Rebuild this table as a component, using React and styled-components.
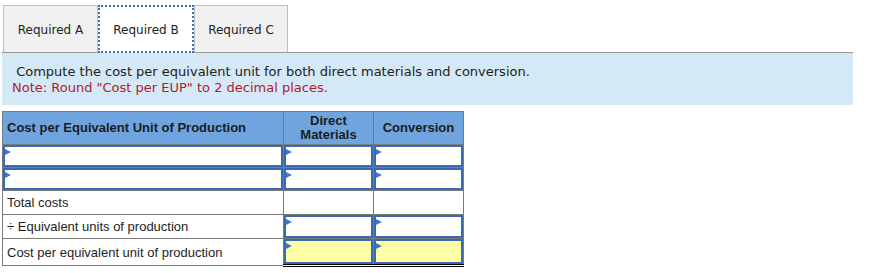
import React from "react";
import styled, { createGlobalStyle } from "styled-components";

const Global = createGlobalStyle`
  html, body { margin: 0; padding: 0; background: #fff; }
  body { font-family: "DejaVu Sans", Verdana, sans-serif; }
`;

const Page = styled.div`
  padding: 5px 0 0 2px;
  width: 851px;
`;

const TabBar = styled.div`
  display: flex;
  padding-left: 1px;
  border-bottom: 1px solid #9a9a9a;
  height: 47px;
`;

const Tab = styled.div`
  display: flex;
  align-items: center;
  justify-content: center;
  box-sizing: border-box;
  padding-top: 2px;
  width: ${(p) => p.$w}px;
  height: ${(p) => (p.$active ? 48 : 47)}px;
  font-size: 12px;
  color: #222;
  background: ${(p) => (p.$active ? "#fff" : "#f0f0f0")};
  border: ${(p) => (p.$active ? "2px dotted #3f6fb6" : "1px solid #bdbdbd")};
  border-bottom: ${(p) => (p.$active ? "2px dotted #3f6fb6" : "none")};
  ${(p) => (p.$active ? "position: relative; z-index: 1;" : "")}
`;

const Note = styled.div`
  background: #d5e8f6;
  height: 52px;
  box-sizing: border-box;
  padding: 11px 0 0 10px;
  font-size: 13px;
  line-height: 16px;
  color: #222;
`;

const Warn = styled.div`
  color: #b0202c;
`;

const Table = styled.table`
  margin-top: 6px;
  border-collapse: collapse;
  table-layout: fixed;
  width: 461px;
  font-family: "Liberation Sans", Arial, sans-serif;
  font-size: 13px;
  color: #1e1e1e;
`;

const Th = styled.th`
  background: #6fa4df;
  border: 1px solid #7a7a7a;
  height: 32px;
  padding: 0 4px;
  font-weight: bold;
  text-align: ${(p) => (p.$left ? "left" : "center")};
  line-height: 14px;
  color: #1c1c1c;
`;

const Td = styled.td`
  border: 1px solid #7a7a7a;
  height: ${(p) => p.$h}px;
  padding: ${(p) => (p.$text ? "0 4px" : "0")};
  ${(p) => (p.$double ? "border-bottom: 3px double #000;" : "")}
`;

const Field = styled.div`
  position: relative;
  box-sizing: border-box;
  height: ${(p) => p.$h}px;
  border: 2px solid #3a69ad;
  background: ${(p) => (p.$hl ? "#ffffa6" : "#fff")};
  &::before {
    content: "";
    position: absolute;
    left: 0;
    top: 2px;
    border-left: 6px solid #3f76c8;
    border-top: 3px solid transparent;
    border-bottom: 3px solid transparent;
  }
`;

const rowsTop = [0, 1];

export default function App() {
  return (
    <>
      <Global />
      <Page>
        <TabBar>
          <Tab $w={95}>Required A</Tab>
          <Tab $w={96} $active>Required B</Tab>
          <Tab $w={94}>Required C</Tab>
        </TabBar>
        <Note>
          <div>&nbsp;Compute the cost per equivalent unit for both direct materials and conversion.</div>
          <Warn>Note: Round "Cost per EUP" to 2 decimal places.</Warn>
        </Note>
        <Table>
          <colgroup>
            <col style={{ width: 281 }} />
            <col style={{ width: 90 }} />
            <col style={{ width: 90 }} />
          </colgroup>
          <thead>
            <tr>
              <Th $left>Cost per Equivalent Unit of Production</Th>
              <Th>Direct<br />Materials</Th>
              <Th>Conversion</Th>
            </tr>
          </thead>
          <tbody>
            {rowsTop.map((r) => (
              <tr key={r}>
                <Td $h={22}><Field $h={22} /></Td>
                <Td $h={22}><Field $h={22} /></Td>
                <Td $h={22}><Field $h={22} /></Td>
              </tr>
            ))}
            <tr>
              <Td $h={23} $text>Total costs</Td>
              <Td $h={23} />
              <Td $h={23} />
            </tr>
            <tr>
              <Td $h={23} $text>÷ Equivalent units of production</Td>
              <Td $h={23}><Field $h={23} /></Td>
              <Td $h={23}><Field $h={23} /></Td>
            </tr>
            <tr>
              <Td $h={25} $text>Cost per equivalent unit of production</Td>
              <Td $h={25} $double><Field $h={25} $hl /></Td>
              <Td $h={25} $double><Field $h={25} $hl /></Td>
            </tr>
          </tbody>
        </Table>
      </Page>
    </>
  );
}
